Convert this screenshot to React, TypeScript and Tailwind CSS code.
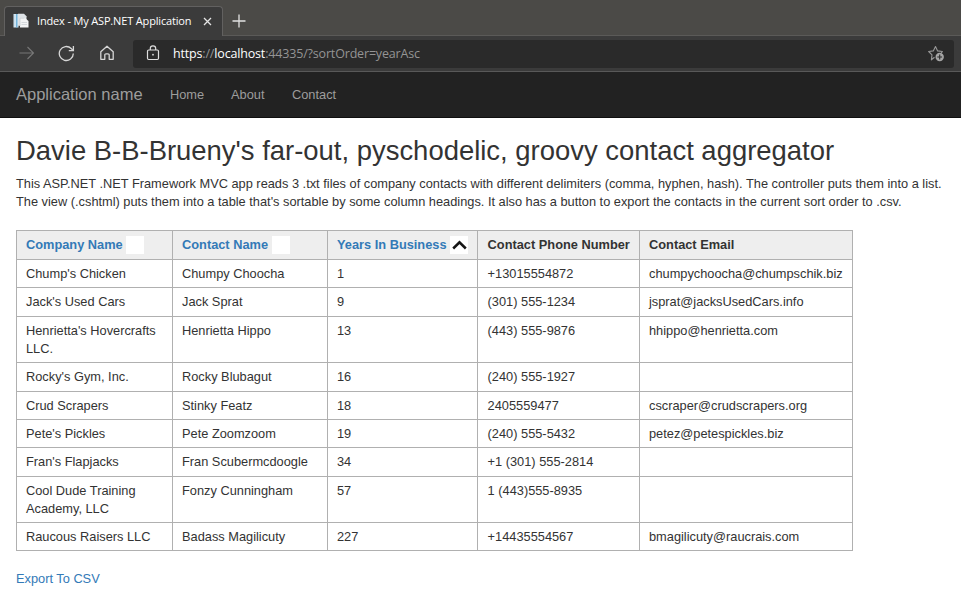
import React from "react";

type Contact = {
  company: string[];
  name: string;
  years: string;
  phone: string;
  email: string;
  height: string;
};

const contacts: Contact[] = [
  { company: ["Chump's Chicken"], name: "Chumpy Choocha", years: "1", phone: "+13015554872", email: "chumpychoocha@chumpschik.biz", height: "h-[28px]" },
  { company: ["Jack's Used Cars"], name: "Jack Sprat", years: "9", phone: "(301) 555-1234", email: "jsprat@jacksUsedCars.info", height: "h-[29px]" },
  { company: ["Henrietta's Hovercrafts", "LLC."], name: "Henrietta Hippo", years: "13", phone: "(443) 555-9876", email: "hhippo@henrietta.com", height: "h-[46px]" },
  { company: ["Rocky's Gym, Inc."], name: "Rocky Blubagut", years: "16", phone: "(240) 555-1927", email: "", height: "h-[29px]" },
  { company: ["Crud Scrapers"], name: "Stinky Featz", years: "18", phone: "2405559477", email: "cscraper@crudscrapers.org", height: "h-[28px]" },
  { company: ["Pete's Pickles"], name: "Pete Zoomzoom", years: "19", phone: "(240) 555-5432", email: "petez@petespickles.biz", height: "h-[28px]" },
  { company: ["Fran's Flapjacks"], name: "Fran Scubermcdoogle", years: "34", phone: "+1 (301) 555-2814", email: "", height: "h-[29px]" },
  { company: ["Cool Dude Training", "Academy, LLC"], name: "Fonzy Cunningham", years: "57", phone: "1 (443)555-8935", email: "", height: "h-[46px]" },
  { company: ["Raucous Raisers LLC"], name: "Badass Magilicuty", years: "227", phone: "+14435554567", email: "bmagilicuty@raucrais.com", height: "h-[28px]" },
];

function TabStrip() {
  return (
    <div className="flex h-9 items-end border-b border-[#5b5a58] bg-[#4b4a47] pl-[4px]">
      <div className="-mb-px flex h-[30px] w-[219px] items-center rounded-t-[4px] border border-b-0 border-[#626160] bg-[#3b3b3b] pl-[8px]">
        <svg width="16" height="16" viewBox="0 0 16 16" className="-mt-px shrink-0">
          <path d="M.5 1h5v13.500h-5z" fill="#d9e9f4" />
          <path d="M1.200 1.500h1.300v12H1.200z" fill="#c3deee" />
          <path d="M5 .8h6L13.500 3.200v9.500H5z" fill="#dfe3e7" />
          <path d="M7 5h5L15.500 8v6.500H7z" fill="#f3f4f5" />
          <path d="M3.800 1v13.500" stroke="#5ba5d2" strokeWidth="1.200" />
          <path d="M7 13V5.200h4.500M8.500 9.500h5.500M8.500 11.500h5.500" stroke="#c6ccd1" strokeWidth=".7" fill="none" />
        </svg>
        <span className="-mt-px ml-[8px] w-[155px] whitespace-nowrap font-['Open_Sans',sans-serif] text-[11px] font-medium leading-4 tracking-[-0.16px] text-white">
          Index - My ASP.NET Application
        </span>
        <svg width="9" height="9" viewBox="0 0 9 9" className="ml-[11px]">
          <path d="M1 1l7 7M8 1L1 8" stroke="#e4e4e4" strokeWidth="1.3" />
        </svg>
      </div>
      <svg width="14" height="14" viewBox="0 0 14 14" className="mb-[7px] ml-[9px]">
        <path d="M7 .5v13M.5 7h13" stroke="#e2e2e2" strokeWidth="1.3" />
      </svg>
    </div>
  );
}

function Toolbar() {
  return (
    <div className="flex h-9 items-center border-b border-[#595959] bg-[#3b3b3b] pr-[7px]">
      <svg width="16" height="14" viewBox="0 0 16 14" className="-mt-px ml-[19px]" fill="none" stroke="#777" strokeWidth="1.1">
        <path d="M.5 7h14M8.500 1l6 6-6 6" />
      </svg>
      <svg width="17" height="17" viewBox="0 0 17 17" className="-mt-px ml-[23px]" fill="none" stroke="#d6d6d6" strokeWidth="1.3">
        <path d="M15.300 8.500a7 7 0 1 1-2.100-5l2 2" />
        <path d="M15.400 1v4.700h-4.600" />
      </svg>
      <svg width="16" height="16" viewBox="0 0 16 16" className="-mt-px ml-[24px]" fill="none" stroke="#d6d6d6" strokeWidth="1.3" strokeLinejoin="round">
        <path d="M1.800 6.800L8 1.200 14.200 6.800v7.500h-4V10A1.200 1.200 0 0 0 9 8.800H7A1.200 1.200 0 0 0 5.800 10v4.300h-4z" />
      </svg>
      <div className="ml-[18px] flex h-[28px] flex-1 items-center rounded-[3px] bg-[#2a2a2a] pl-[13px] pr-[9px]">
        <svg width="14" height="16" viewBox="0 0 14 16" fill="none" stroke="#dedede" strokeWidth="1.2" className="-mt-px">
          <rect x="1.500" y="5" width="11" height="9.500" rx="1.200" />
          <path d="M4.300 5V3.500a2.700 2.700 0 0 1 5.400 0V5" />
          <circle cx="7" cy="9.700" r=".9" fill="#dedede" stroke="none" />
        </svg>
        <span className="ml-[13px] whitespace-nowrap font-['Open_Sans',sans-serif] text-[12.5px] leading-4 tracking-[-0.17px] text-[#949494]">
          <span className="font-medium text-white">https</span>://<span className="font-medium text-white">localhost</span>:44335/?sortOrder=yearAsc
        </span>
        <svg width="17" height="17" viewBox="0 0 17 17" className="ml-auto" fill="none">
          <path d="M6.500 12.300l-3.100 2.500.6-5L.7 6.500l4.600-.6L7.500 1.500l2.100 4.400 4.800.6-1.300 1.300" stroke="#989898" strokeWidth="1.1" strokeLinejoin="round" />
          <circle cx="11.700" cy="12" r="4.200" fill="#a5a5a5" />
          <path d="M11.700 9.600v4.800M9.300 12h4.800" stroke="#2a2a2a" strokeWidth="1.100" />
        </svg>
      </div>
    </div>
  );
}

function SortHeader({ label, ascending = false }: { label: string; ascending?: boolean }) {
  return (
    <a className="flex items-center text-[#337ab7]">
      {label}
      <span className="ml-[3.500px] flex size-[18px] shrink-0 items-center justify-center bg-white">
        {ascending && (
          <svg width="15" height="10" viewBox="0 0 15 10" fill="none">
            <path d="M1.200 8.500L7.500 2.300l6.300 6.200" stroke="#151515" strokeWidth="2.500" />
          </svg>
        )}
      </span>
    </a>
  );
}

const head = "border-b border-r border-[#b0b0b0] bg-[#eee] py-0 pl-[9px] text-left align-middle font-bold";
const cell = "border-b border-r border-[#b0b0b0] py-0 pl-[9px] pt-[5px] text-left align-top";
const phoneHead = "border-b border-r border-[#b0b0b0] bg-[#eee] py-0 pl-[9.6px] text-left align-middle font-bold";
const phoneCell = "border-b border-r border-[#b0b0b0] py-0 pl-[9.6px] pt-[5px] text-left align-top";

export default function App() {
  return (
    <div className="h-[602px] w-[961px] overflow-hidden bg-white font-['Liberation_Sans',Arial,sans-serif] text-[12.81px] text-[#333]">
      <TabStrip />
      <Toolbar />
      <nav className="flex h-[46px] items-center whitespace-nowrap border-b border-[#101010] bg-[#222] pl-4 text-[#9d9d9d]">
        <span className="w-[154px] text-[16.5px]">Application name</span>
        <span className="w-[61px]">Home</span>
        <span className="w-[61px]">About</span>
        <span>Contact</span>
      </nav>
      <main className="whitespace-nowrap pl-4 leading-[18px]">
        <h2 className="mt-[17px] text-[27.45px] leading-[31px]">
          Davie B-B-Brueny's far-out, pyschodelic, groovy contact aggregator
        </h2>
        <p className="mt-[9px]">
          This ASP.NET .NET Framework MVC app reads 3 .txt files of company contacts with different delimiters (comma, hyphen, hash). The controller puts them into a list.
          <br />
          The view (.cshtml) puts them into a table that's sortable by some column headings. It also has a button to export the contacts in the current sort order to .csv.
        </p>
        <table className="mt-[19px] w-[837px] table-fixed border-separate border-spacing-0 border-l border-t border-[#b0b0b0]">
          <colgroup>
            <col className="w-[156px]" />
            <col className="w-[155px]" />
            <col className="w-[150px]" />
            <col className="w-[162px]" />
            <col className="w-[213px]" />
          </colgroup>
          <thead>
            <tr className="h-[29px]">
              <th className={head}><SortHeader label="Company Name" /></th>
              <th className={head}><SortHeader label="Contact Name" /></th>
              <th className={head}><SortHeader label="Years In Business" ascending /></th>
              <th className={phoneHead}>Contact Phone Number</th>
              <th className={head}>Contact Email</th>
            </tr>
          </thead>
          <tbody>
            {contacts.map((c) => (
              <tr key={c.name} className={c.height}>
                <td className={cell}>
                  {c.company.map((line) => (
                    <div key={line}>{line}</div>
                  ))}
                </td>
                <td className={cell}>{c.name}</td>
                <td className={cell}>{c.years}</td>
                <td className={phoneCell}>{c.phone}</td>
                <td className={cell}>{c.email}</td>
              </tr>
            ))}
          </tbody>
        </table>
        <a className="mt-[19px] block text-[#337ab7]">Export To CSV</a>
      </main>
    </div>
  );
}
